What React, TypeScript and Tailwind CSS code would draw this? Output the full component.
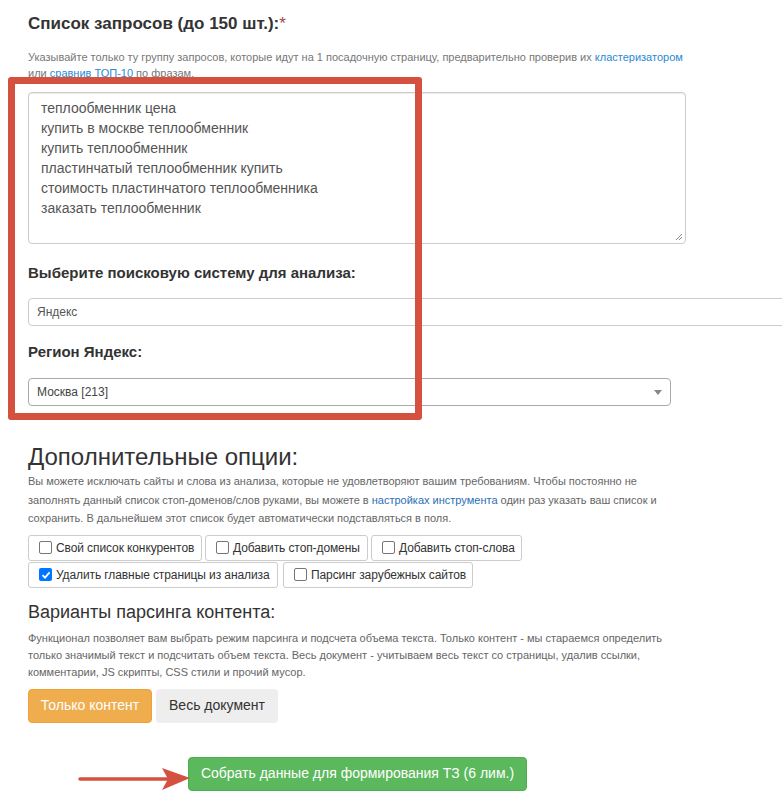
import React from 'react';

const QUERIES = [
  'теплообменник цена',
  'купить в москве теплообменник',
  'купить теплообменник',
  'пластинчатый теплообменник купить',
  'стоимость пластинчатого теплообменника',
  'заказать теплообменник',
];

const Check: React.FC<{ label: string; checked?: boolean; className?: string }> = ({ label, checked, className }) => (
  <label className={`flex items-center h-[26px] border border-[#ccc] rounded-[3px] pl-[10px] pr-[4px] text-[12px] tracking-[-0.1px] whitespace-nowrap text-[#333] ${className ?? ''}`}>
    {checked ? (
      <span className="shrink-0 w-[13px] h-[13px] rounded-[2px] bg-[#0075ff] flex items-center justify-center mr-[4px]">
        <svg width="10" height="10" viewBox="0 0 10 10">
          <path d="M1.5 5.2 L4 7.6 L8.6 2.4" stroke="#fff" strokeWidth="1.8" fill="none" />
        </svg>
      </span>
    ) : (
      <span className="shrink-0 w-[13px] h-[13px] rounded-[2px] border border-[#767676] bg-white mr-[4px]" />
    )}
    {label}
  </label>
);

const App: React.FC = () => {
  return (
    <div className="relative w-[782px] h-[801px] overflow-hidden bg-white text-[#333] font-['Liberation_Sans',Arial,sans-serif]">
      <div className="pl-[28px] pt-[12px]">
        {/* Queries */}
        <h2 className="text-[17px] font-bold leading-[24px]">
          Список запросов (до 150 шт.):<span className="text-[#a94442] font-normal">*</span>
        </h2>
        <p className="mt-[13px] text-[11px] leading-[16px] text-[#777]">
          Указывайте только ту группу запросов, которые идут на 1 посадочную страницу, предварительно проверив их{' '}
          <a className="text-[#2a8ad2]">кластеризатором</a>
          <br />
          или <a className="text-[#2a8ad2] underline">сравнив ТОП-10</a> по фразам.
        </p>
        <div className="mt-[11px] w-[658px] h-[152px] border border-[#ccc] rounded-[4px] shadow-[inset_0_1px_1px_rgba(0,0,0,0.075)] pl-[12px] pt-[5px] text-[14px] leading-[20px] text-[#555] relative">
          {QUERIES.map((q) => (
            <div key={q}>{q}</div>
          ))}
          <svg className="absolute right-[2px] bottom-[2px]" width="9" height="9" viewBox="0 0 9 9">
            <path d="M8 2 L2 8 M8 5 L5 8" stroke="#888" strokeWidth="1" />
          </svg>
        </div>

        {/* Search system */}
        <h3 className="mt-[18px] text-[15px] font-bold leading-[22px]">Выберите поисковую систему для анализа:</h3>
        <div className="mt-[14px] w-[800px] h-[28px] border border-[#ccc] rounded-[4px] flex items-center pl-[8px] text-[12px] text-[#555]">
          Яндекс
        </div>
        <h3 className="mt-[15px] text-[15px] font-bold leading-[22px]">Регион Яндекс:</h3>
        <div className="mt-[15px] w-[643px] h-[28px] border border-[#aaa] rounded-[4px] flex items-center justify-between pl-[8px] pr-[8px] text-[12px] text-[#444]">
          <span>Москва [213]</span>
          <svg width="8" height="5" viewBox="0 0 8 5">
            <path d="M0 0 L8 0 L4 5 Z" fill="#888" />
          </svg>
        </div>

        {/* Extra options */}
        <h2 className="mt-[36px] text-[24px] leading-[30px] font-light text-[#333]">Дополнительные опции:</h2>
        <p className="mt-0 text-[11px] leading-[18.5px] text-[#666]">
          Вы можете исключать сайты и слова из анализа, которые не удовлетворяют вашим требованиям. Чтобы постоянно не
          <br />
          заполнять данный список стоп-доменов/слов руками, вы можете в{' '}
          <a className="text-[#2a6fb5]">настройках инструмента</a> один раз указать ваш список и
          <br />
          сохранить. В дальнейшем этот список будет автоматически подставляться в поля.
        </p>
        <div className="mt-[7px] flex flex-col gap-[1px]">
          <div className="flex gap-[3px]">
            <Check label="Свой список конкурентов" className="w-[174px]" />
            <Check label="Добавить стоп-домены" className="w-[163px]" />
            <Check label="Добавить стоп-слова" className="w-[151px]" />
          </div>
          <div className="flex gap-[5px]">
            <Check label="Удалить главные страницы из анализа" checked className="w-[250px]" />
            <Check label="Парсинг зарубежных сайтов" className="w-[190px]" />
          </div>
        </div>

        {/* Parsing variants */}
        <h2 className="mt-[12px] text-[18px] leading-[24px] font-light">Варианты парсинга контента:</h2>
        <p className="mt-[6px] text-[11px] leading-[17px] text-[#666]">
          Функционал позволяет вам выбрать режим парсинга и подсчета объема текста. Только контент - мы стараемся определить
          <br />
          только значимый текст и подсчитать объем текста. Весь документ - учитываем весь текст со страницы, удалив ссылки,
          <br />
          комментарии, JS скрипты, CSS стили и прочий мусор.
        </p>
        <div className="mt-[8px] flex gap-[4px]">
          <button className="w-[124px] h-[34px] rounded-[4px] bg-[#f0ad4e] border border-[#eea236] text-white text-[14px]">
            Только контент
          </button>
          <button className="w-[122px] h-[34px] rounded-[4px] bg-[#eee] text-[#333] text-[14px]">Весь документ</button>
        </div>

        <div className="mt-[34px] pl-[160px]">
          <button className="w-[339px] h-[34px] rounded-[4px] bg-[#5cb85c] border border-[#4cae4c] text-white text-[14px]">
            Собрать данные для формирования ТЗ (6 лим.)
          </button>
        </div>
      </div>

      {/* Annotations */}
      <div className="absolute left-[8px] top-[77px] w-[414px] h-[343px] border-[7px] border-[#d4513f] rounded-[3px] pointer-events-none" />
      <svg className="absolute left-[78px] top-[764px] pointer-events-none" width="115" height="30" viewBox="0 0 115 30">
        <path d="M2 15 L95 15" stroke="#d4513f" strokeWidth="3.5" strokeLinecap="round" />
        <path d="M84 4 L112 14 L84 26 L90 15 Z" fill="#d4513f" />
      </svg>
    </div>
  );
};

export default App;
